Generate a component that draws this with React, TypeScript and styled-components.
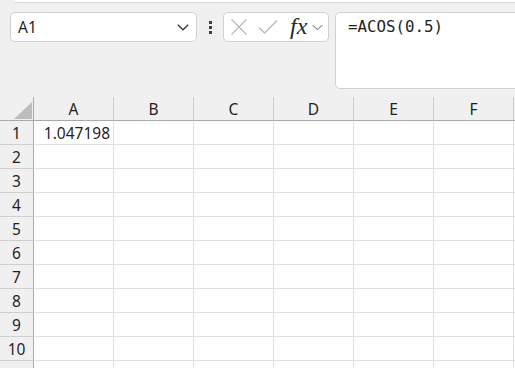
import React from "react";
import styled, { createGlobalStyle } from "styled-components";

const Global = createGlobalStyle`
  html, body { margin: 0; padding: 0; background: #f0f0f0; overflow: hidden; }
  body { font-family: "Noto Sans", "Open Sans", sans-serif; color: #1f1f1f; }
`;

const Page = styled.div`
  width: 515px;
  height: 368px;
  overflow: hidden;
  display: flex;
  flex-direction: column;
`;

const RibbonEdge = styled.div`
  margin-left: 14px;
  height: 2px;
  background: #ffffff;
  border-bottom: 1px solid #d6d6d6;
  border-bottom-left-radius: 4px;
  flex: none;
`;

const FormulaRow = styled.div`
  display: flex;
  align-items: flex-start;
  padding: 9px 0 0 10px;
  height: 76px;
  flex: none;
`;

const Box = styled.div`
  background: #ffffff;
  border: 1px solid #d1d1d1;
  border-radius: 5px;
  box-sizing: border-box;
  flex: none;
`;

const NameBox = styled(Box)`
  width: 187px;
  height: 30px;
  display: flex;
  align-items: center;
  justify-content: space-between;
  padding: 0 7px 0 7px;
  font-size: 15.5px;
`;

const Grip = styled.div`
  width: 26px;
  height: 30px;
  display: flex;
  flex-direction: column;
  align-items: center;
  justify-content: center;
  gap: 2px;
  flex: none;
`;

const GripDot = styled.span`
  width: 3px;
  height: 3px;
  background: #404040;
`;

const FxBox = styled(Box)`
  width: 106px;
  height: 30px;
  display: flex;
  align-items: center;
  padding-left: 6px;
  gap: 10px;
`;

const FxText = styled.span`
  font-family: "Liberation Serif", "DejaVu Serif", serif;
  font-style: italic;
  font-size: 24px;
  color: #262626;
  line-height: 1;
  margin-left: 2px;
  margin-right: -5px;
  margin-top: -2px;
`;

const FormulaInput = styled(Box)`
  margin-left: 6px;
  width: 200px;
  height: 77px;
  padding: 4px 0 0 12px;
  font-family: "DejaVu Sans Mono", "Liberation Mono", monospace;
  font-size: 15.8px;
  color: #1f1f1f;
`;

const Sheet = styled.div`
  margin-top: 9px;
  display: grid;
  grid-template-columns: 34px repeat(6, 80px) 1fr;
  grid-auto-rows: 24px;
  flex: none;
`;

const Corner = styled.div`
  background: #f0f0f0;
  border-right: 1px solid #a9a9a9;
  border-bottom: 1px solid #a9a9a9;
  box-sizing: border-box;
  position: relative;
`;

const CornerTriangle = styled.svg`
  position: absolute;
  right: 1px;
  bottom: 1px;
`;

const ColHead = styled.div`
  background: #f0f0f0;
  border-bottom: 1px solid #a9a9a9;
  border-right: 1px solid #cfcfcf;
  box-sizing: border-box;
  display: flex;
  align-items: center;
  justify-content: center;
  font-size: 15.5px;
  color: #1f1f1f;
`;

const RowHead = styled.div`
  background: #f0f0f0;
  border-right: 1px solid #a9a9a9;
  border-bottom: 1px solid #cfcfcf;
  box-sizing: border-box;
  display: flex;
  align-items: center;
  justify-content: center;
  font-size: 15.5px;
  color: #1f1f1f;
`;

const Cell = styled.div<{ $num?: boolean }>`
  background: #ffffff;
  border-right: 1px solid #e0e0e0;
  border-bottom: 1px solid #e0e0e0;
  box-sizing: border-box;
  display: flex;
  align-items: center;
  justify-content: ${(p) => (p.$num ? "flex-end" : "flex-start")};
  padding: 0 3px;
  font-size: 15.5px;
  color: #1f1f1f;
  white-space: nowrap;
`;

const Chevron = ({ color = "#333", w = 12 }: { color?: string; w?: number }) => (
  <svg width={w} height={7} viewBox="0 0 12 7" fill="none">
    <path d="M0.8 0.8 L6 5.8 L11.2 0.8" stroke={color} strokeWidth="1.2" />
  </svg>
);

const XIcon = () => (
  <svg width="18" height="18" viewBox="0 0 18 18" fill="none">
    <path d="M1.5 1.5 L16.5 16.5 M16.5 1.5 L1.5 16.5" stroke="#b8b8b8" strokeWidth="1.3" />
  </svg>
);

const CheckIcon = () => (
  <svg width="20" height="16" viewBox="0 0 20 16" fill="none">
    <path d="M1 8.5 L6.5 14 L19 1.5" stroke="#b8b8b8" strokeWidth="1.3" />
  </svg>
);

const columns = ["A", "B", "C", "D", "E", "F"];
const rows = [1, 2, 3, 4, 5, 6, 7, 8, 9, 10];

export default function App() {
  return (
    <Page>
      <Global />
      <RibbonEdge />
      <FormulaRow>
        <NameBox>
          <span>A1</span>
          <Chevron />
        </NameBox>
        <Grip>
          <GripDot />
          <GripDot />
          <GripDot />
        </Grip>
        <FxBox>
          <XIcon />
          <CheckIcon />
          <FxText>fx</FxText>
          <Chevron color="#8a8a8a" w={11} />
        </FxBox>
        <FormulaInput>=ACOS(0.5)</FormulaInput>
      </FormulaRow>
      <Sheet>
        <Corner>
          <CornerTriangle width="18" height="17" viewBox="0 0 18 17">
            <polygon points="18,0 18,17 0,17" fill="#bdbdbd" />
          </CornerTriangle>
        </Corner>
        {columns.map((c) => (
          <ColHead key={c}>{c}</ColHead>
        ))}
        <ColHead />
        {rows.map((r) => (
          <React.Fragment key={r}>
            <RowHead>{r}</RowHead>
            {columns.map((c) => (
              <Cell key={c} $num={r === 1 && c === "A"}>
                {r === 1 && c === "A" ? "1.047198" : ""}
              </Cell>
            ))}
            <Cell />
          </React.Fragment>
        ))}
        <RowHead />
        {columns.map((c) => (
          <Cell key={c} />
        ))}
        <Cell />
      </Sheet>
    </Page>
  );
}
